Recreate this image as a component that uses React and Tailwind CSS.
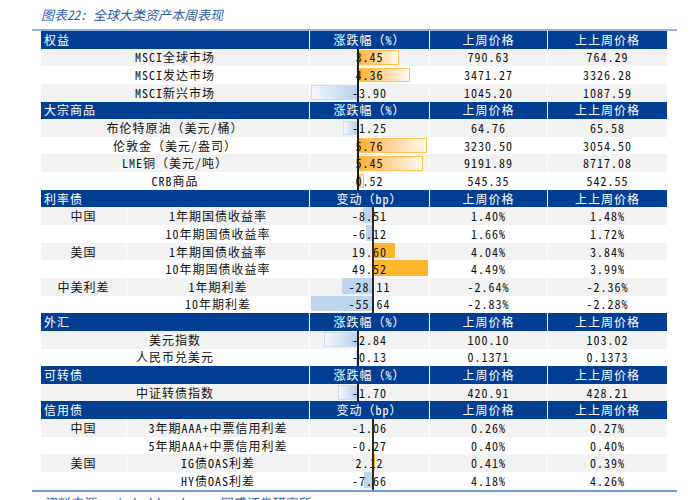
import React from "react";

const sections = [
  {
    title: "权益",
    unit: "涨跌幅（%）",
    kind: "pct",
    rows: [
      ["MSCI全球市场", null, 3.45, "3.45", "790.63", "764.29"],
      ["MSCI发达市场", null, 4.36, "4.36", "3471.27", "3326.28"],
      ["MSCI新兴市场", null, -3.9, "-3.90", "1045.20", "1087.59"],
    ],
  },
  {
    title: "大宗商品",
    unit: "涨跌幅（%）",
    kind: "pct",
    rows: [
      ["布伦特原油（美元/桶）", null, -1.25, "-1.25", "64.76", "65.58"],
      ["伦敦金（美元/盎司）", null, 5.76, "5.76", "3230.50", "3054.50"],
      ["LME铜（美元/吨）", null, 5.45, "5.45", "9191.89", "8717.08"],
      ["CRB商品", null, 0.52, "0.52", "545.35", "542.55"],
    ],
  },
  {
    title: "利率债",
    unit: "变动（bp）",
    kind: "bp",
    rows: [
      ["中国", "1年期国债收益率", -8.51, "-8.51", "1.40%", "1.48%"],
      ["", "10年期国债收益率", -6.12, "-6.12", "1.66%", "1.72%"],
      ["美国", "1年期国债收益率", 19.6, "19.60", "4.04%", "3.84%"],
      ["", "10年期国债收益率", 49.52, "49.52", "4.49%", "3.99%"],
      ["中美利差", "1年期利差", -28.11, "-28.11", "-2.64%", "-2.36%"],
      ["", "10年期利差", -55.64, "-55.64", "-2.83%", "-2.28%"],
    ],
  },
  {
    title: "外汇",
    unit: "涨跌幅（%）",
    kind: "pct",
    rows: [
      ["美元指数", null, -2.84, "-2.84", "100.10", "103.02"],
      ["人民币兑美元", null, -0.13, "-0.13", "0.1371", "0.1373"],
    ],
  },
  {
    title: "可转债",
    unit: "涨跌幅（%）",
    kind: "pct",
    rows: [["中证转债指数", null, -1.7, "-1.70", "420.91", "428.21"]],
  },
  {
    title: "信用债",
    unit: "变动（bp）",
    kind: "bp",
    rows: [
      ["中国", "3年期AAA+中票信用利差", -1.06, "-1.06", "0.26%", "0.27%"],
      ["", "5年期AAA+中票信用利差", -0.27, "-0.27", "0.40%", "0.40%"],
      ["美国", "IG债OAS利差", 2.12, "2.12", "0.41%", "0.39%"],
      ["", "HY债OAS利差", -7.66, "-7.66", "4.18%", "4.26%"],
    ],
  },
];

function PctBar({ v }) {
  const axis = 48;
  const w = Math.abs(v) * 12;
  const pos = v >= 0;
  return (
    <>
      <div
        className={
          pos
            ? "absolute top-[1.5px] bottom-[1.5px] border border-[#ffc24f] bg-linear-to-r from-[#ffae1c] to-[#fffaf0]"
            : "absolute top-[1.5px] bottom-[1.5px] border border-[#c9dbef] bg-linear-to-r from-[#f4f8fd] to-[#b8d0ea]"
        }
        style={{ left: pos ? axis : axis - w, width: w }}
      />
      <div className="absolute top-0 bottom-0 left-[47px] w-[2px] bg-[#1e1e1e] z-20" />
    </>
  );
}

function BpBar({ v }) {
  const axis = 63;
  const w = Math.abs(v) * 1.12;
  const pos = v >= 0;
  return (
    <>
      <div
        className={
          pos
            ? "absolute top-0 bottom-[2px] bg-[#ffb62c]"
            : "absolute top-0 bottom-[2px] bg-[#bdd5ee]"
        }
        style={{ left: pos ? axis : axis - w, width: w }}
      />
      <div className="absolute top-0 bottom-0 left-[62px] w-[2px] bg-[#2a2a2a] z-20" />
    </>
  );
}

function HeaderRow({ title, unit }) {
  return (
    <div className="flex gap-px h-[17.65px] text-white">
      <div className="w-[268px] bg-[#023f93] flex items-center pl-[3px]">{title}</div>
      <div className="w-[119px] bg-[#023f93] flex items-center justify-center">{unit}</div>
      <div className="w-[117px] bg-[#023f93] flex items-center justify-center">上周价格</div>
      <div className="w-[119px] bg-[#023f93] flex items-center justify-center">上上周价格</div>
    </div>
  );
}

function DataRow({ row, idx, kind }) {
  const [a, b, v, vs, p1, p2] = row;
  const bg = idx % 2 === 0 ? "bg-[#f2f2f2]" : "bg-white";
  return (
    <div className="flex gap-px h-[17.65px] text-[#111]">
      {b === null ? (
        <div className={`w-[268px] ${bg} flex items-center justify-center`}>{a}</div>
      ) : (
        <>
          <div className={`w-[85px] ${bg} flex items-center justify-center`}>{a}</div>
          <div className={`w-[182px] ${bg} flex items-center justify-center`}>{b}</div>
        </>
      )}
      <div className={`w-[119px] ${bg} relative flex items-center justify-center`}>
        {kind === "pct" ? <PctBar v={v} /> : <BpBar v={v} />}
        <span className="relative z-10">{vs}</span>
      </div>
      <div className={`w-[117px] ${bg} flex items-center justify-center`}>{p1}</div>
      <div className={`w-[119px] ${bg} flex items-center justify-center`}>{p2}</div>
    </div>
  );
}

export default function App() {
  return (
    <div className="w-[694px] h-[500px] bg-white overflow-hidden font-['Noto_Sans_Mono_CJK_SC','Noto_Sans_CJK_SC',sans-serif]">
      <div className="h-[29px] pl-[41px] pt-[6px] text-[13px] italic text-[#2b5ca8] leading-[17px]">
        图表22:&nbsp;全球大类资产本周表现
      </div>
      <div className="ml-[32px] w-[645px] h-[2px] bg-[#8fb0dc]" />
      <div className="ml-[41px] w-[626px] text-[12px] tracking-[1px] leading-none">
        {sections.map((s) => (
          <React.Fragment key={s.title}>
            <HeaderRow title={s.title} unit={s.unit} />
            {s.rows.map((r, i) => (
              <DataRow key={i} row={r} idx={i} kind={s.kind} />
            ))}
          </React.Fragment>
        ))}
      </div>
      <div className="ml-[32px] w-[645px] h-[2px] bg-[#6f9bd6]" />
      <div className="pl-[43px] pt-[3px] text-[13px] italic text-[#2b5ca8] leading-[16px]">
        资料来源：wind、bloomberg、国盛证券研究所
      </div>
    </div>
  );
}
